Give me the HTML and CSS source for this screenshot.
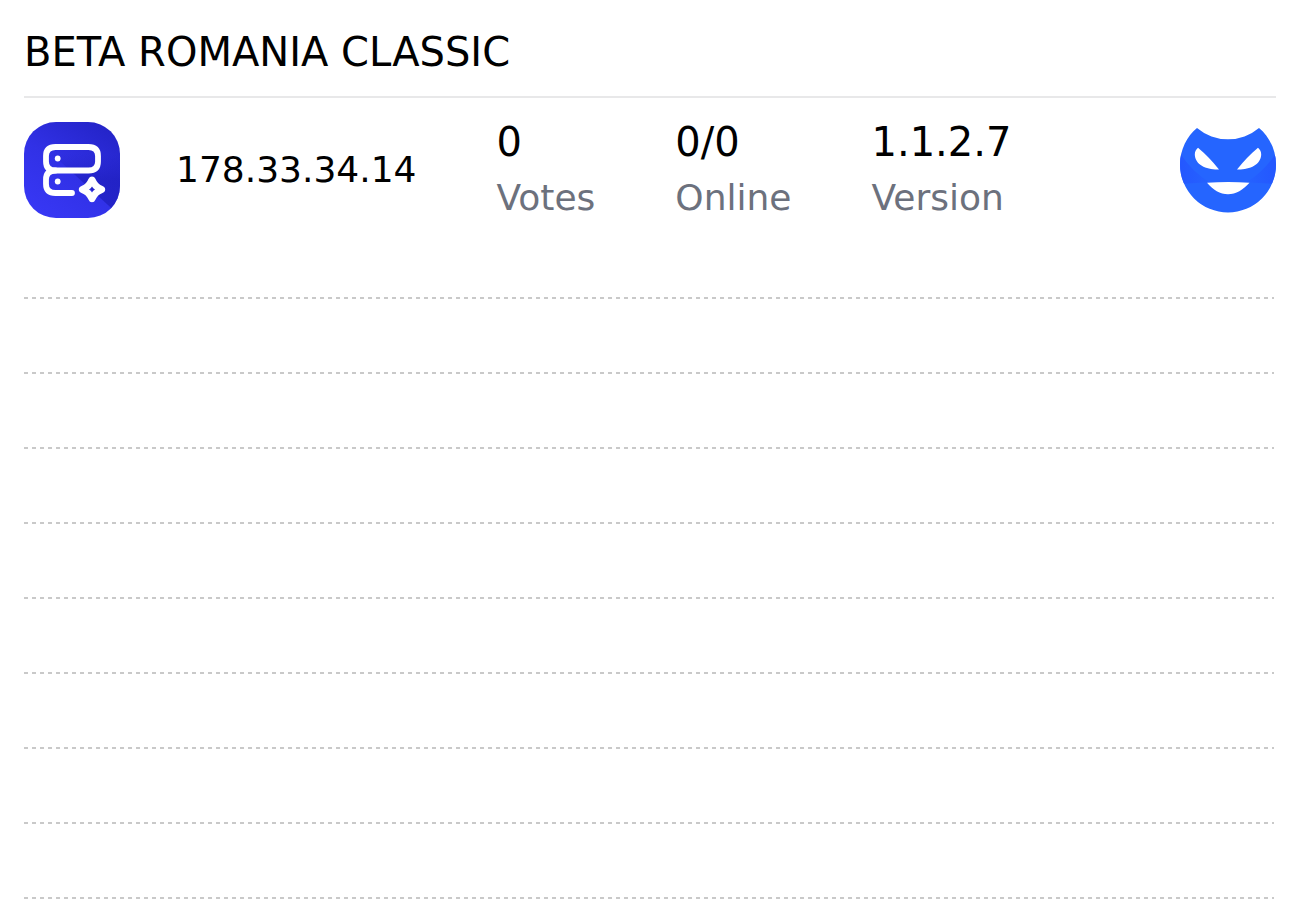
FILE: index.html
```html
<!DOCTYPE html>
<html lang="en">
<head>
<meta charset="utf-8">
<meta name="viewport" content="width=device-width, initial-scale=1">
<title>BETA ROMANIA CLASSIC</title>
<link rel="stylesheet" href="styles.css">
</head>
<body>
<main class="widget">
  <h1 class="title">BETA ROMANIA CLASSIC</h1>
  <section class="server">
    <svg class="logo" viewBox="0 0 96 96" role="img" aria-label="Server list">
      <defs>
        <linearGradient id="tile" x1=".1" y1="1" x2=".8" y2="0">
          <stop offset="0" stop-color="#3838f6"/>
          <stop offset=".5" stop-color="#3131e6"/>
          <stop offset="1" stop-color="#2424c8"/>
        </linearGradient>
        <linearGradient id="shade" x1="0" y1="0" x2="0" y2="1">
          <stop offset="0" stop-color="#1c1cb8" stop-opacity="0"/>
          <stop offset=".4" stop-color="#1c1cb8" stop-opacity=".6"/>
          <stop offset="1" stop-color="#1c1cb8" stop-opacity=".7"/>
        </linearGradient>
        <clipPath id="round"><rect width="96" height="96" rx="32"/></clipPath>
      </defs>
      <g clip-path="url(#round)">
        <rect width="96" height="96" fill="url(#tile)"/>
        <path d="M28 32 96 94V32Z" fill="url(#shade)"/>
      </g>
      <g fill="none" stroke="#fff" stroke-width="5.8" stroke-linecap="round" stroke-linejoin="round">
        <path d="M31.500 25h33q9.500 0 9.500 9v5.500q0 9-9.500 9h-33q-9.500 0-9.500-9V34q0-9 9.500-9Z"/>
        <path d="M31.500 48.500q-9.500 0-9.500 9V62q0 9 9.500 9h16.500"/>
      </g>
      <circle cx="33.700" cy="36.500" r="2.900" fill="#fff"/>
      <circle cx="33.700" cy="59.500" r="2.900" fill="#fff"/>
      <path fill="#fff" fill-rule="evenodd" d="M68 54.500q2.400 0 3.400 2.300 2.400 5.600 6.600 7 3.200 1.200 3.200 3.700T78 71.200q-4.200 1.400-6.600 6.500-1 2.500-3.400 2.500t-3.400-2.500q-2.400-5.100-6.600-6.500-3.200-1.200-3.200-3.700t3.200-3.700q4.200-1.400 6.600-7 1-2.300 3.400-2.300ZM68 64.500Q67 66.500 65 67.500 67 68.500 68 70.500 69 68.500 71 67.500 69 66.500 68 64.500Z"/>
    </svg>
    <div class="address">178.33.34.14</div>
    <dl class="stats">
      <div><dt>Votes</dt><dd>0</dd></div>
      <div><dt>Online</dt><dd>0/0</dd></div>
      <div><dt>Version</dt><dd>1.1.2.7</dd></div>
    </dl>
    <svg class="mask" viewBox="0 0 96 96" role="img" aria-label="Smiling mask">
      <defs>
        <clipPath id="face"><path d="M17 6A48 48 0 0 0 79 6C89 14 96 28 96 42.500a48 48 0 0 1-96 0C0 28 7 14 17 6Z"/></clipPath>
        <linearGradient id="cheek" x1="0" y1="0" x2="1" y2="0">
          <stop offset="0" stop-color="#2457ff"/>
          <stop offset=".3" stop-color="#2562ff"/>
          <stop offset=".7" stop-color="#2562ff"/>
          <stop offset="1" stop-color="#2457ff"/>
        </linearGradient>
      </defs>
      <g clip-path="url(#face)">
        <rect width="96" height="96" fill="#2565ff"/>
        <path d="M0 31Q12 50 30 60.500H66Q84 50 96 31V62Q48 58 0 62Z" fill="url(#cheek)"/>
      </g>
      <path fill="#fff" d="M18 25.800Q29 35 39 47.500C27 48 15 43 14.800 32.500Q14.800 28.500 18 25.800ZM78 25.800Q67 35 57 47.500C69 48 81 43 81.200 32.500Q81.200 28.500 78 25.800ZM27 60.800Q48 59.200 69.500 60.800C63 68 56 72.200 48 72.200S33 68 27 60.800Z"/>
    </svg>
  </section>
  <div class="rules" aria-hidden="true">
    <div class="rule"></div><div class="rule"></div><div class="rule"></div>
    <div class="rule"></div><div class="rule"></div><div class="rule"></div>
    <div class="rule"></div><div class="rule"></div><div class="rule"></div>
  </div>
</main>
</body>
</html>
```
FILE: styles.css
```css
* {
  box-sizing: border-box;
}

body {
  margin: 0;
  background: #fff;
  color: #000;
  font-family: "DejaVu Sans", sans-serif;
  font-size: 36px;
  line-height: 56px;
}

.widget {
  padding: 24px 24px 0;
}

.title {
  margin: 0;
  padding-bottom: 16px;
  border-bottom: 2px solid #e8e8e9;
  font-size: 40px;
  font-weight: 400;
}

.server {
  display: flex;
  align-items: center;
  padding: 16px 0;
}

.logo,
.mask {
  flex: none;
  width: 96px;
  height: 96px;
}

.address {
  margin: 0 80px 0 56px;
}

.stats {
  display: flex;
  gap: 80px;
  margin: 0;
}

.stats div {
  display: flex;
  flex-direction: column-reverse;
}

.stats dt {
  color: #6c717d;
}

.stats dd {
  margin: 0;
  font-size: 40px;
}

.mask {
  margin-left: auto;
}

.rules {
  display: grid;
  gap: 73px;
  padding: 55px 2px 0 0;
}

.rule {
  height: 2px;
  background: repeating-linear-gradient(to right, #c9c9c9 0 4px, transparent 4px 8px);
}
```
